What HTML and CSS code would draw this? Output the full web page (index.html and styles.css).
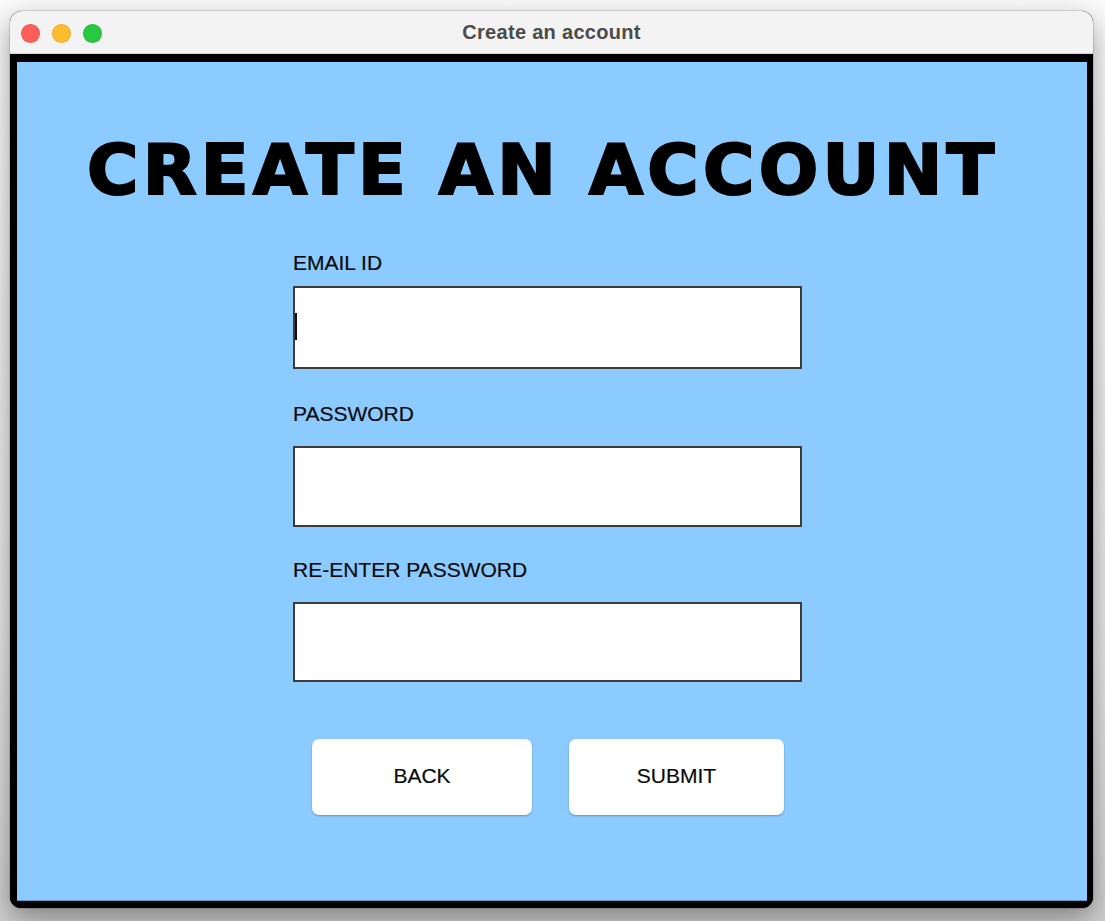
FILE: index.html
```html
<!DOCTYPE html>
<html lang="en">
<head>
<meta charset="utf-8">
<title>Create an account</title>
<link rel="stylesheet" href="styles.css">
</head>
<body>
<div class="window">
  <div class="titlebar">
    <div class="lights">
      <span class="light red"></span>
      <span class="light yellow"></span>
      <span class="light green"></span>
    </div>
    <div class="wintitle">Create an account</div>
  </div>
  <div class="frame">
    <div class="content">
      <h1 class="heading">CREATE AN ACCOUNT</h1>
      <div class="form">
        <div class="label label-email">EMAIL ID</div>
        <div class="field field-email"><span class="caret"></span></div>
        <div class="label label-pass">PASSWORD</div>
        <div class="field field-pass"></div>
        <div class="label label-pass2">RE-ENTER PASSWORD</div>
        <div class="field field-pass2"></div>
        <div class="buttons">
          <div class="btn btn-back">BACK</div>
          <div class="btn btn-submit">SUBMIT</div>
        </div>
      </div>
    </div>
  </div>
</div>
</body>
</html>
```
FILE: styles.css
```css
html, body {
  margin: 0;
  padding: 0;
}
body {
  width: 1105px;
  height: 921px;
  overflow: hidden;
  background: linear-gradient(#fbfbfb, #e6e6e6 70%, #cfcfcf);
  font-family: "Liberation Sans", Arial, sans-serif;
}
.window {
  margin: 11px 0 0 10px;
  width: 1083px;
  height: 897px;
  display: flex;
  flex-direction: column;
  border-radius: 12px 12px 11px 11px;
  box-shadow: 0 10px 28px rgba(0,0,0,0.38), 0 0 0 1px rgba(0,0,0,0.12);
  background: #000;
}
.titlebar {
  height: 42px;
  border-bottom: 1px solid #d6d6d6;
  background: #f3f3f3;
  border-radius: 12px 12px 0 0;
  display: flex;
  align-items: center;
  position: relative;
}
.lights {
  display: flex;
  gap: 12px;
  padding-left: 11px;
  padding-top: 2px;
}
.light {
  width: 19px;
  height: 19px;
  border-radius: 50%;
  box-sizing: border-box;
  border: 1px solid rgba(0,0,0,0.08);
}
.red { background: #ff5f57; }
.yellow { background: #febc2e; }
.green { background: #28c840; }
.wintitle {
  position: absolute;
  left: 0;
  right: 0;
  top: 0;
  bottom: 0;
  display: flex;
  align-items: center;
  justify-content: center;
  font-size: 20px;
  font-weight: bold;
  color: #4b4b4b;
  letter-spacing: 0.3px;
  pointer-events: none;
}
.frame {
  flex: 1;
  border-style: solid;
  border-color: #000;
  border-width: 8px 6px 7px 7px;
  border-radius: 0 0 11px 11px;
  background: #8ccbff;
  display: flex;
}
.content {
  flex: 1;
  background: #8ccbff;
  border-bottom: 1px solid #5d9bcc;
  padding-top: 73px;
}
.heading {
  margin: 0;
  padding-left: 70px;
  font-family: "DejaVu Sans", sans-serif;
  font-weight: bold;
  font-size: 70px;
  line-height: 70px;
  letter-spacing: 4.3px;
  -webkit-text-stroke: 2.2px #000;
  white-space: nowrap;
  color: #000;
}
.form {
  margin-left: 276px;
  width: 509px;
  display: flex;
  flex-direction: column;
}
.label {
  font-size: 21px;
  line-height: 24px;
  color: #0a0a0a;
  -webkit-text-stroke: 0.2px #0a0a0a;
}
.label-email { margin-top: 46px; }
.label-pass { margin-top: 33px; }
.label-pass2 { margin-top: 31px; }
.field {
  box-sizing: border-box;
  width: 509px;
  background: #fff;
  border: 2px solid #3c3c3c;
  display: flex;
  align-items: center;
}
.field-email { height: 83px; margin-top: 11px; }
.field-pass { height: 81px; margin-top: 20px; }
.field-pass2 { height: 80px; margin-top: 20px; }
.caret {
  width: 2px;
  height: 27px;
  background: #111;
  margin-left: 0;
  margin-top: -2px;
}
.buttons {
  display: flex;
  margin-top: 57px;
  padding-left: 19px;
  gap: 37px;
}
.btn {
  height: 76px;
  background: #fff;
  border-radius: 7px;
  box-shadow: 0 1px 2px rgba(40,80,120,0.45);
  display: flex;
  align-items: center;
  justify-content: center;
  font-size: 21px;
  color: #0a0a0a;
  -webkit-text-stroke: 0.2px #0a0a0a;
  padding-bottom: 2px;
  box-sizing: border-box;
}
.btn-back { width: 220px; }
.btn-submit { width: 215px; }
```
